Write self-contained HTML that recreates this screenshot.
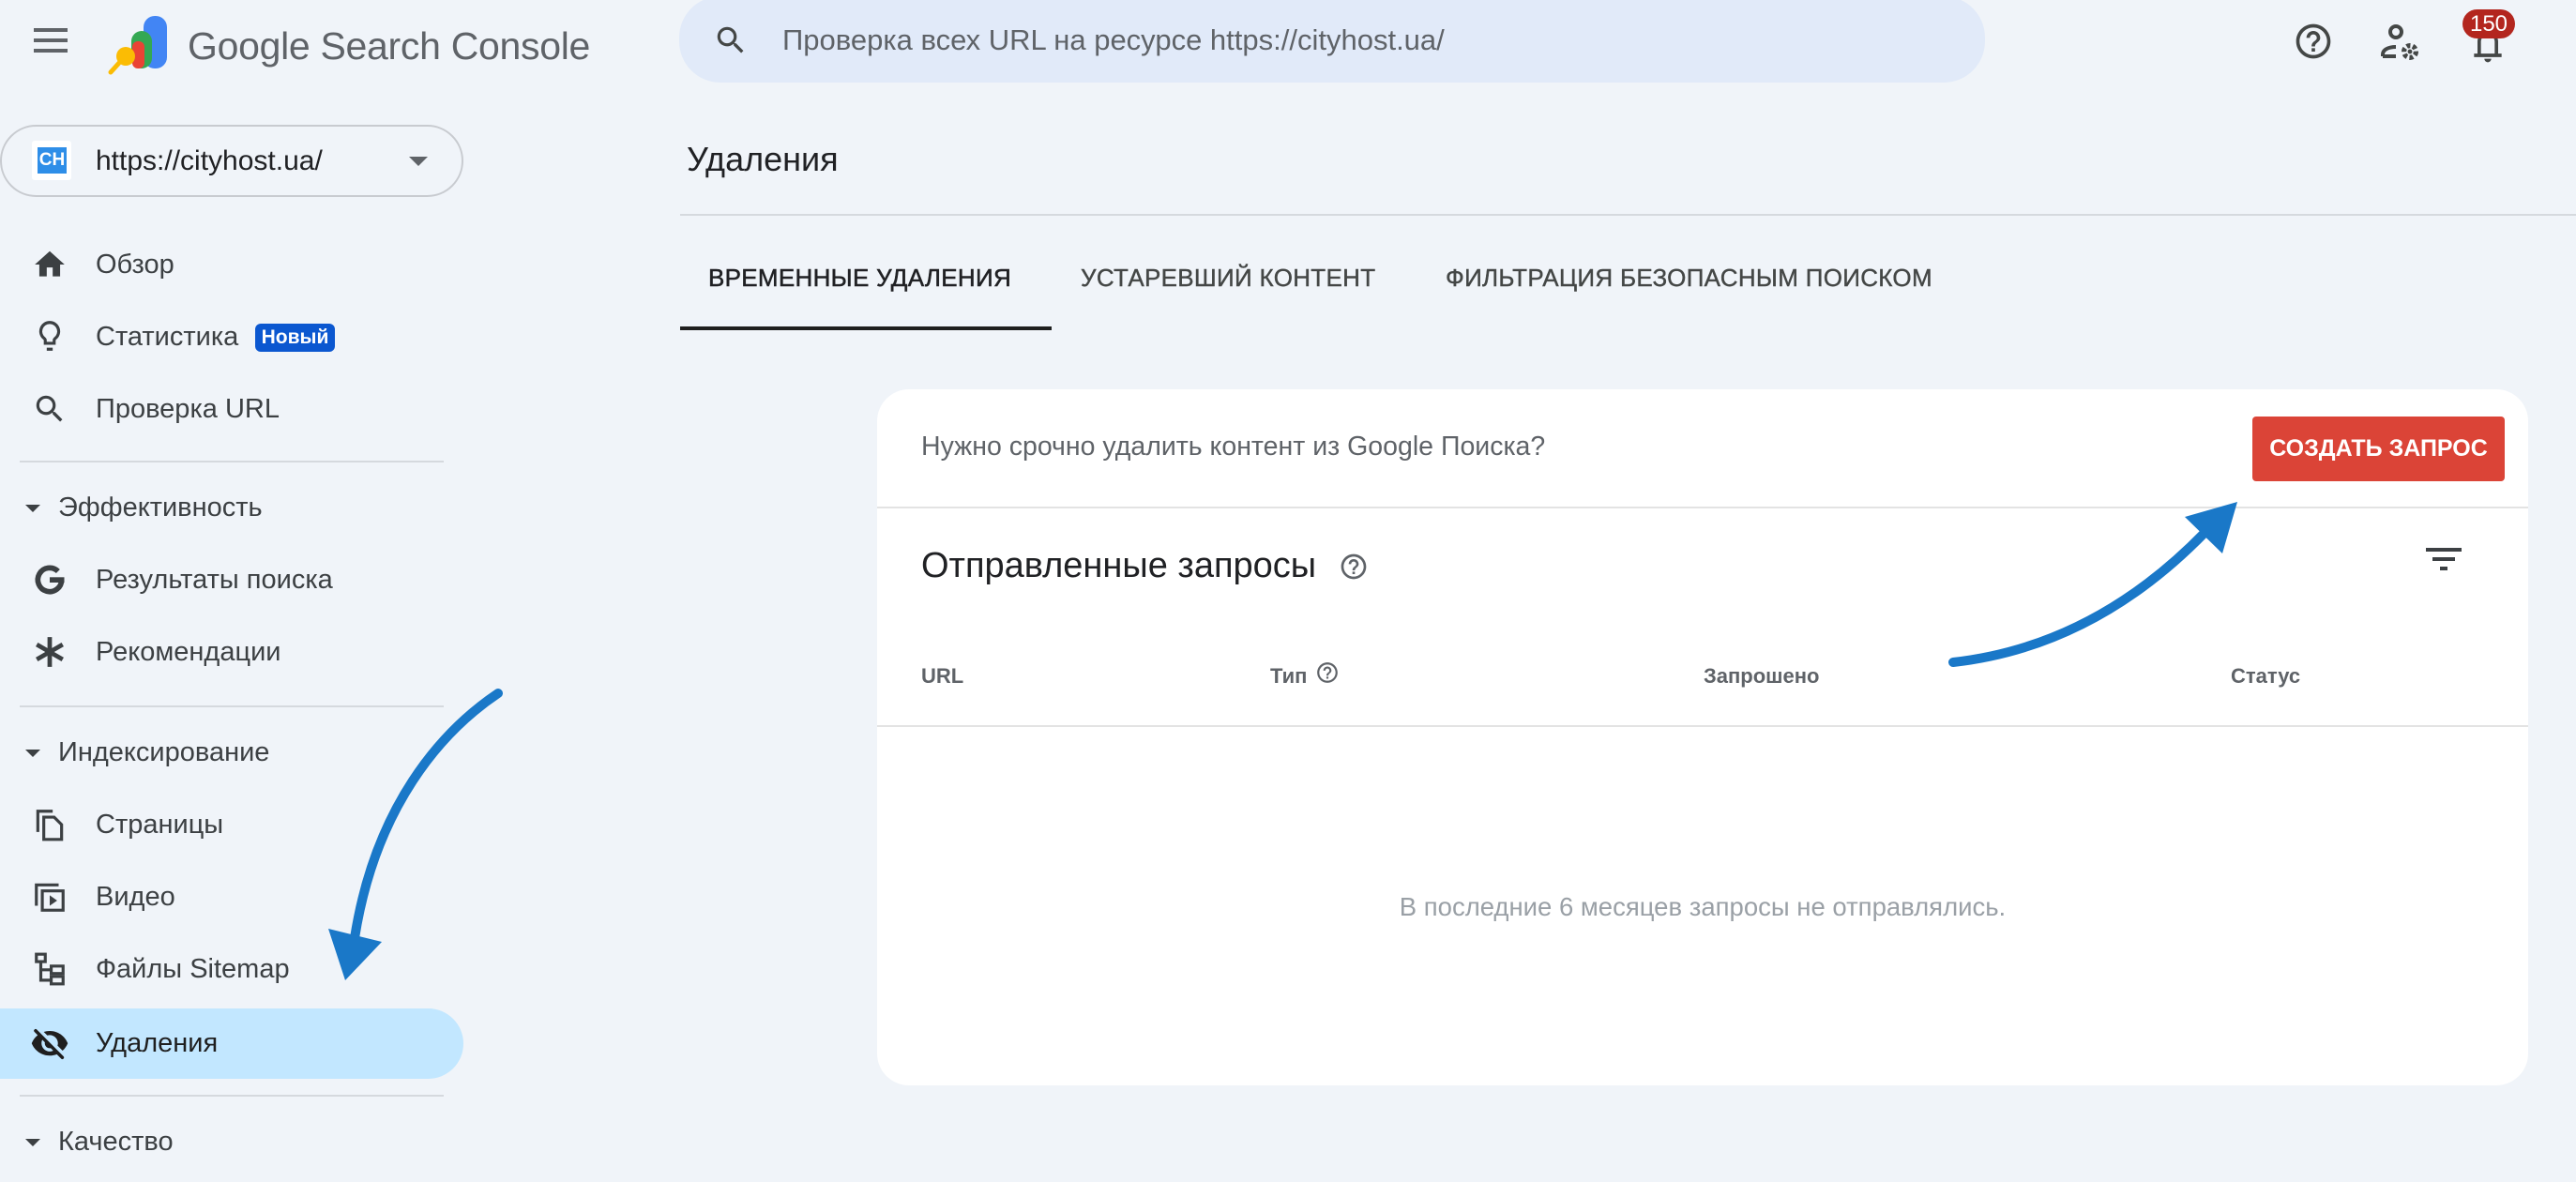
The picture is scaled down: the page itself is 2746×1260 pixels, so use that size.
<!DOCTYPE html>
<html><head><meta charset="utf-8"><style>
*{margin:0;padding:0;box-sizing:border-box}
body{width:2746px;height:1260px;background:#f0f4f9;font-family:"Liberation Sans",Arial,sans-serif;position:relative;overflow:hidden;color:#3c4043}
.a{position:absolute;white-space:nowrap}
.nav{position:absolute;left:102px;font-size:29px;color:#3c4043;line-height:34px}
.ic{position:absolute;left:34px;width:38px;height:38px}
.sec{position:absolute;left:62px;font-size:29px;color:#3c4043;line-height:34px}
.tri{position:absolute;left:27px;width:0;height:0;border-left:8px solid transparent;border-right:8px solid transparent;border-top:8px solid #3c4043}
.hr{position:absolute;left:21px;width:452px;height:2px;background:#d5d9de}
.th{position:absolute;top:708px;font-size:22px;color:#5f6368;font-weight:bold;line-height:26px}
</style></head><body>

<div class="a" style="left:36px;top:30px;width:36px;height:26px">
 <div style="height:4px;background:#5f6368;margin-bottom:7px"></div>
 <div style="height:4px;background:#5f6368;margin-bottom:7px"></div>
 <div style="height:4px;background:#5f6368"></div>
</div>
<svg class="a" style="left:110px;top:14px" width="75" height="66" viewBox="110 14 75 66">
 <rect x="153" y="17" width="25" height="56" rx="12" fill="#4285f4"/>
 <rect x="140" y="33" width="22" height="40" rx="11" fill="#34a853"/>
 <rect x="141" y="44" width="13" height="29" rx="6" fill="#ea4335"/>
 <line x1="127" y1="67" x2="118" y2="77" stroke="#fbbc04" stroke-width="5" stroke-linecap="round"/>
 <circle cx="134" cy="60" r="10" fill="#fbbc04"/>
</svg>
<div class="a" style="left:200px;top:23px;font-size:41px;color:#5f6368;line-height:52px;letter-spacing:-0.3px">Google Search Console</div>

<div class="a" style="left:724px;top:-4px;width:1392px;height:92px;background:#e1eaf9;border-radius:44px"></div>
<svg class="a" style="left:760px;top:24px" width="38" height="38" viewBox="0 0 24 24"><path fill="#444746" d="M15.5 14h-.79l-.28-.27A6.47 6.47 0 0016 9.5 6.5 6.5 0 109.5 16c1.61 0 3.09-.59 4.23-1.57l.27.28v.79l5 4.99L20.49 19l-4.99-5zm-6 0C7.01 14 5 11.99 5 9.5S7.01 5 9.5 5 14 7.01 14 9.5 11.99 14 9.5 14z"/></svg>
<div class="a" style="left:834px;top:25px;font-size:31px;color:#5f6368;line-height:36px">Проверка всех URL на ресурсе https://cityhost.ua/</div>

<svg class="a" style="left:2444px;top:22px" width="44" height="44" viewBox="0 0 24 24"><path fill="#444746" d="M11 18h2v-2h-2v2zm1-16C6.48 2 2 6.48 2 12s4.48 10 10 10 10-4.48 10-10S17.52 2 12 2zm0 18c-4.41 0-8-3.59-8-8s3.59-8 8-8 8 3.59 8 8-3.59 8-8 8zm0-14c-2.21 0-4 1.79-4 4h2c0-1.1.9-2 2-2s2 .9 2 2c0 2-3 1.75-3 5h2c0-2.25 3-2.5 3-5 0-2.21-1.79-4-4-4z"/></svg>
<svg class="a" style="left:2534px;top:22px" width="48" height="48" viewBox="0 0 24 24"><g fill="none" stroke="#444746" stroke-width="2"><circle cx="10" cy="6" r="3"/><path d="M3 19v-1c0-2.5 3-4 7-4"/><path d="M3 19h7"/></g><circle cx="17.5" cy="16.5" r="3.2" fill="none" stroke="#444746" stroke-width="2.6" stroke-dasharray="2 1.3"/><circle cx="17.5" cy="16.5" r="1.2" fill="#444746"/></svg>
<svg class="a" style="left:2630px;top:26px" width="44" height="44" viewBox="0 0 24 24"><path fill="#444746" d="M4 19v-2h2v-7c0-2.8 1.8-5.2 4.5-5.8V3.5h3v.7C16.2 4.8 18 7.2 18 10v7h2v2H4zm4-2h8v-7c0-2.2-1.8-4-4-4s-4 1.8-4 4v7zm2 3h4c0 1.1-.9 2-2 2s-2-.9-2-2z"/></svg>
<div class="a" style="left:2625px;top:10px;width:56px;height:31px;background:#b3261e;border-radius:16px;color:#fff;font-size:24px;line-height:31px;text-align:center">150</div>

<div class="a" style="left:0;top:133px;width:494px;height:77px;border:2px solid #c8cbd0;border-radius:39px"></div>
<div class="a" style="left:34px;top:150px;width:42px;height:42px;background:#fff;border-radius:3px"></div>
<div class="a" style="left:40px;top:157px;width:31px;height:28px;background:#2e8ee8;color:#fff;font-size:19px;line-height:28px;text-align:center;font-weight:bold">CH</div>
<div class="a" style="left:102px;top:154px;font-size:30px;color:#202124;line-height:36px">https://cityhost.ua/</div>
<div class="a" style="left:436px;top:167px;border-left:10px solid transparent;border-right:10px solid transparent;border-top:10px solid #5f6368"></div>

<svg class="ic" style="top:263px" viewBox="0 0 24 24"><path fill="#3c4043" d="M10 20v-6h4v6h5v-8h3L12 3 2 12h3v8z"/></svg>
<div class="nav" style="top:265px">Обзор</div>
<svg class="ic" style="top:339px" viewBox="0 0 24 24"><path fill="none" stroke="#3c4043" stroke-width="2" d="M9 17h6M10 21h4M12 3a6 6 0 00-3.5 10.9c.3.3.5.8.5 1.2V17h6v-1.9c0-.4.2-.9.5-1.2A6 6 0 0012 3z"/></svg>
<div class="nav" style="top:342px">Статистика</div>
<div class="a" style="left:272px;top:345px;width:85px;height:30px;background:#0b57d0;border-radius:6px;color:#fff;font-size:21px;font-weight:bold;line-height:30px;text-align:center">Новый</div>
<svg class="ic" style="top:417px" viewBox="0 0 24 24"><path fill="#3c4043" d="M15.5 14h-.79l-.28-.27A6.47 6.47 0 0016 9.5 6.5 6.5 0 109.5 16c1.61 0 3.09-.59 4.23-1.57l.27.28v.79l5 4.99L20.49 19l-4.99-5zm-6 0C7.01 14 5 11.99 5 9.5S7.01 5 9.5 5 14 7.01 14 9.5 11.99 14 9.5 14z"/></svg>
<div class="nav" style="top:419px">Проверка URL</div>
<div class="hr" style="top:491px"></div>

<div class="tri" style="top:538px"></div>
<div class="sec" style="top:524px">Эффективность</div>
<svg class="ic" style="top:599px" viewBox="0 0 24 24"><path fill="none" stroke="#3c4043" stroke-width="3.6" d="M20 12a8 8 0 11-2.4-5.7"/><path fill="#3c4043" d="M12 10.3h9.8v3.6H12z"/></svg>
<div class="nav" style="top:601px">Результаты поиска</div>
<svg class="ic" style="top:676px" viewBox="0 0 24 24"><g stroke="#3c4043" stroke-width="3"><path d="M12 2v20M3.3 7l17.4 10M3.3 17l17.4-10"/></g></svg>
<div class="nav" style="top:678px">Рекомендации</div>
<div class="hr" style="top:752px"></div>

<div class="tri" style="top:799px"></div>
<div class="sec" style="top:785px">Индексирование</div>
<svg class="ic" style="top:860px" viewBox="0 0 24 24"><g fill="none" stroke="#3c4043" stroke-width="2"><path d="M4 17V3h10"/><path d="M8 7h7l5 5v10H8z"/></g></svg>
<div class="nav" style="top:862px">Страницы</div>
<svg class="ic" style="top:937px" viewBox="0 0 24 24"><g fill="none" stroke="#3c4043" stroke-width="2"><path d="M3 18V4h15"/><rect x="7" y="8" width="14" height="13"/></g><path fill="#3c4043" d="M12 11v7l5-3.5z"/></svg>
<div class="nav" style="top:939px">Видео</div>
<svg class="ic" style="top:1014px" viewBox="0 0 24 24"><g fill="none" stroke="#3c4043" stroke-width="2"><rect x="3" y="2" width="6" height="5"/><rect x="13" y="10" width="8" height="5"/><rect x="13" y="17" width="8" height="5"/><path d="M6 7v12.5h7M6 12.5h7"/></g></svg>
<div class="nav" style="top:1016px">Файлы Sitemap</div>
<div class="a" style="left:0;top:1075px;width:494px;height:75px;background:#c2e7ff;border-radius:0 38px 38px 0"></div>
<svg class="ic" style="top:1092px;left:32px;width:42px;height:42px" viewBox="0 0 24 24"><path fill="#1f1f1f" d="M12 6.5c2.76 0 5 2.24 5 5 0 .51-.1 1-.24 1.46l3.06 3.06c1.39-1.23 2.490-2.77 3.18-4.53C21.27 7.11 17 4 12 4c-1.27 0-2.49.2-3.64.57l2.17 2.17c.46-.14.96-.24 1.47-.24zM2.71 3.16a1 1 0 000 1.41l1.97 1.97A11.9 11.9 0 001 11.5C2.73 15.89 7 19 12 19c1.52 0 2.97-.3 4.31-.82l2.72 2.72a1 1 0 001.41-1.41L4.130 3.16a1 1 0 00-1.42 0zM12 16.5c-2.76 0-5-2.240-5-5 0-.77.18-1.5.49-2.14l1.57 1.57c-.03.18-.06.37-.06.57 0 1.66 1.34 3 3 3 .2 0 .38-.03.57-.07l1.57 1.57c-.65.32-1.37.5-2.14.5z"/></svg>
<div class="nav" style="top:1095px;color:#1f1f1f">Удаления</div>
<div class="hr" style="top:1167px"></div>
<div class="tri" style="top:1214px"></div>
<div class="sec" style="top:1200px">Качество</div>

<div class="a" style="left:732px;top:149px;font-size:36px;color:#202124;line-height:42px">Удаления</div>
<div class="a" style="left:725px;top:228px;width:2021px;height:2px;background:#d5d9de"></div>
<div class="a" style="left:755px;top:281px;font-size:26px;color:#202124;line-height:30px;-webkit-text-stroke:0.5px #202124;letter-spacing:0.3px">ВРЕМЕННЫЕ УДАЛЕНИЯ</div>
<div class="a" style="left:1152px;top:281px;font-size:26px;color:#444746;line-height:30px;-webkit-text-stroke:0.4px #444746;letter-spacing:0.3px">УСТАРЕВШИЙ КОНТЕНТ</div>
<div class="a" style="left:1541px;top:281px;font-size:26px;color:#444746;line-height:30px;-webkit-text-stroke:0.4px #444746;letter-spacing:0.3px">ФИЛЬТРАЦИЯ БЕЗОПАСНЫМ ПОИСКОМ</div>
<div class="a" style="left:725px;top:348px;width:396px;height:4px;background:#1f1f1f"></div>

<div class="a" style="left:935px;top:415px;width:1760px;height:742px;background:#fff;border-radius:34px"></div>
<div class="a" style="left:982px;top:459px;font-size:28.5px;color:#5f6368;line-height:34px">Нужно срочно удалить контент из Google Поиска?</div>
<div class="a" style="left:2401px;top:444px;width:269px;height:69px;background:#db4437;border-radius:4px;color:#fff;font-size:25px;font-weight:bold;line-height:69px;text-align:center">СОЗДАТЬ ЗАПРОС</div>
<div class="a" style="left:935px;top:540px;width:1760px;height:2px;background:#e3e3e3"></div>
<div class="a" style="left:982px;top:581px;font-size:38px;color:#202124;line-height:44px">Отправленные запросы</div>
<svg class="a" style="left:1427px;top:588px" width="32" height="32" viewBox="0 0 24 24"><path fill="#5f6368" d="M11 18h2v-2h-2v2zm1-16C6.48 2 2 6.48 2 12s4.48 10 10 10 10-4.48 10-10S17.52 2 12 2zm0 18c-4.41 0-8-3.59-8-8s3.59-8 8-8 8 3.59 8 8-3.59 8-8 8zm0-14c-2.21 0-4 1.790-4 4h2c0-1.1.9-2 2-2s2 .9 2 2c0 2-3 1.75-3 5h2c0-2.25 3-2.5 3-5 0-2.21-1.79-4-4-4z"/></svg>
<div class="a" style="left:2586px;top:584px;width:38px;height:4px;background:#3c4043"></div>
<div class="a" style="left:2593px;top:594px;width:24px;height:4px;background:#3c4043"></div>
<div class="a" style="left:2601px;top:604px;width:8px;height:4px;background:#3c4043"></div>

<div class="th" style="left:982px">URL</div>
<div class="th" style="left:1354px">Тип</div>
<svg class="a" style="left:1402px;top:704px" width="26" height="26" viewBox="0 0 24 24"><path fill="#5f6368" d="M11 18h2v-2h-2v2zm1-16C6.48 2 2 6.48 2 12s4.48 10 10 10 10-4.48 10-10S17.52 2 12 2zm0 18c-4.41 0-8-3.59-8-8s3.59-8 8-8 8 3.59 8 8-3.59 8-8 8zm0-14c-2.21 0-4 1.79-4 4h2c0-1.1.9-2 2-2s2 .9 2 2c0 2-3 1.75-3 5h2c0-2.25 3-2.5 3-5 0-2.21-1.79-4-4-4z"/></svg>
<div class="th" style="left:1816px">Запрошено</div>
<div class="th" style="left:2378px">Статус</div>
<div class="a" style="left:935px;top:773px;width:1760px;height:2px;background:#e3e3e3"></div>
<div class="a" style="left:935px;top:950px;width:1760px;text-align:center;font-size:27.5px;color:#9aa0a6;line-height:34px">В последние 6 месяцев запросы не отправлялись.</div>

<svg class="a" style="left:0;top:0" width="2746" height="1260">
 <path d="M531,739 C470,780 400,860 378,1000" fill="none" stroke="#1a78c8" stroke-width="10" stroke-linecap="round"/>
 <polygon points="350,990 407,1004 368,1045" fill="#1a78c8"/>
 <path d="M2082,706 C2180,695 2270,650 2350,568" fill="none" stroke="#1a78c8" stroke-width="10" stroke-linecap="round"/>
 <polygon points="2329,551 2385,535 2369,590" fill="#1a78c8"/>
</svg>
</body></html>
